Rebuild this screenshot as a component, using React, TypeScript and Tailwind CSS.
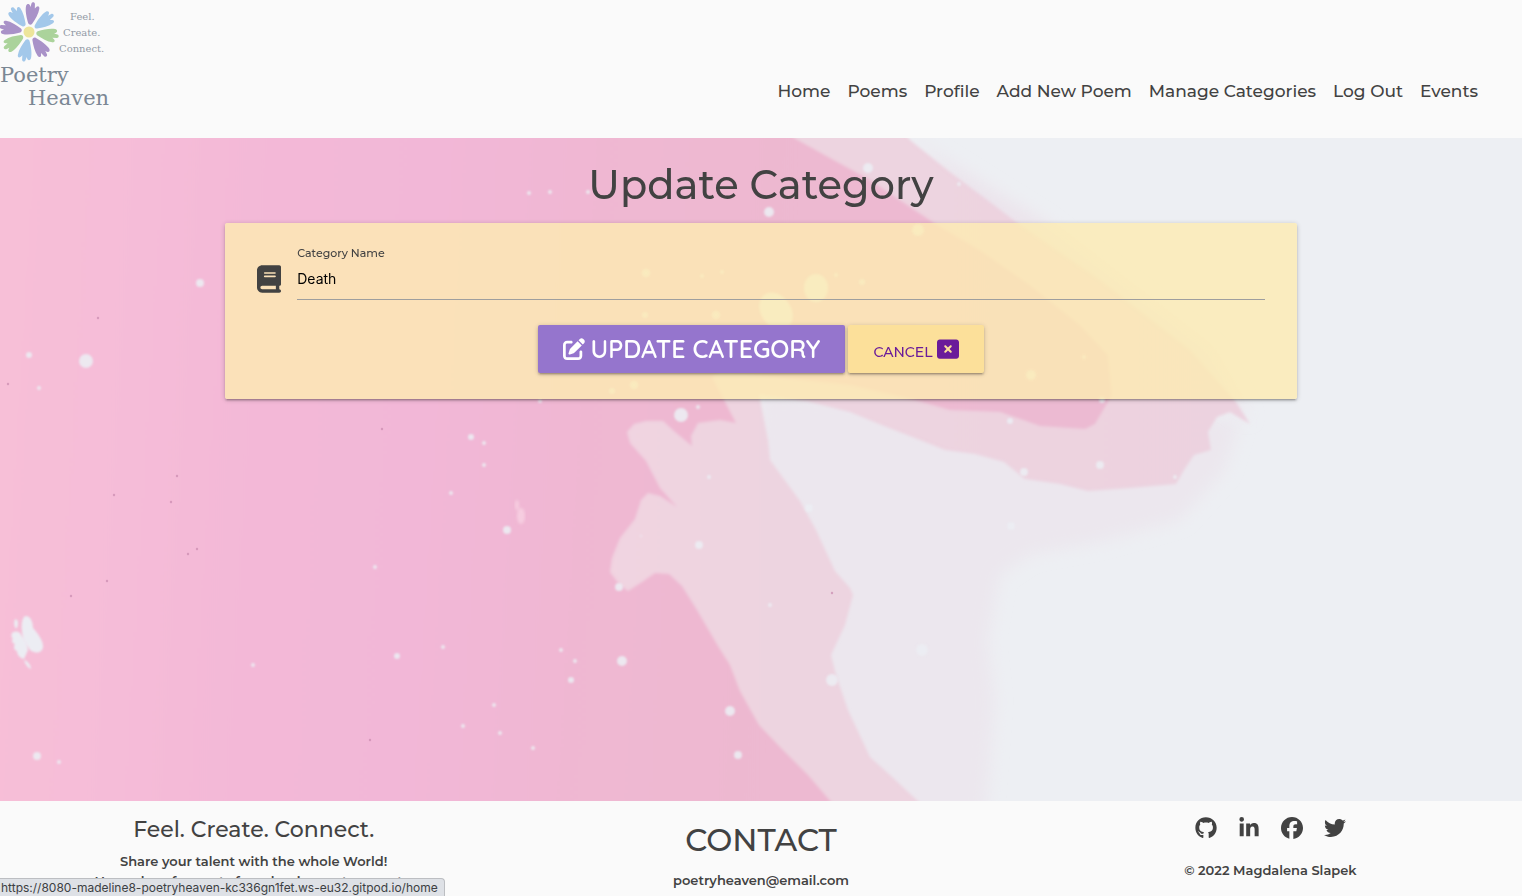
import { FaBook, FaFacebook, FaGithub, FaLinkedinIn, FaPenToSquare, FaRectangleXmark, FaTwitter } from "react-icons/fa6";

const navLinks = ["Home", "Poems", "Profile", "Add New Poem", "Manage Categories", "Log Out", "Events"];

const socialLinks = [
  { name: "GitHub", Icon: FaGithub },
  { name: "LinkedIn", Icon: FaLinkedinIn },
  { name: "Facebook", Icon: FaFacebook },
  { name: "Twitter", Icon: FaTwitter },
];

// Paint droplets: x, y, radius
const droplets = [
  [86, 361, 7], [200, 283, 4], [29, 355, 3], [39, 388, 2], [681, 415, 7], [698, 407, 2], [471, 437, 3],
  [484, 443, 2], [484, 465, 2], [451, 493, 2], [507, 530, 4], [375, 567, 2], [619, 587, 4], [622, 661, 5],
  [730, 711, 5], [738, 755, 4], [571, 680, 3], [575, 661, 2], [561, 650, 2], [494, 705, 2], [397, 656, 3],
  [443, 647, 2], [253, 665, 2], [500, 733, 2], [533, 748, 2], [463, 726, 2], [37, 756, 4], [59, 762, 2],
  [699, 545, 4], [709, 477, 2], [529, 193, 2], [550, 192, 2], [588, 192, 2], [769, 212, 5], [868, 168, 5],
  [959, 184, 2], [918, 230, 6], [645, 315, 3], [646, 273, 4], [716, 315, 4], [702, 276, 2], [722, 272, 2],
  [836, 275, 2], [862, 282, 3], [634, 385, 4], [612, 391, 3], [1084, 357, 2], [1031, 375, 5], [1102, 400, 3],
  [1010, 421, 3], [1024, 472, 4], [1100, 465, 4], [1175, 477, 2], [1011, 526, 4], [832, 680, 6], [922, 650, 6],
  [809, 508, 4], [770, 605, 2], [641, 536, 1], [540, 401, 2],
];

const specks = [
  [98, 318], [114, 495], [382, 429], [197, 549], [107, 581], [71, 596], [370, 740], [171, 502], [188, 554],
  [177, 476], [8, 384], [832, 593],
];

function PaintBackdrop() {
  return (
    <svg aria-hidden="true" viewBox="0 138 1522 663" preserveAspectRatio="none" className="absolute inset-0 h-full w-full">
      <defs>
        <linearGradient id="pink" gradientUnits="userSpaceOnUse" x1="0" y1="460" x2="1000" y2="520">
          <stop offset="0" stopColor="#f7bfd7" />
          <stop offset="0.12" stopColor="#f5bcd8" />
          <stop offset="0.25" stopColor="#f3b8d7" />
          <stop offset="0.42" stopColor="#f2b7d7" />
          <stop offset="0.55" stopColor="#f0b7d3" />
          <stop offset="0.75" stopColor="#edb8d0" />
          <stop offset="1" stopColor="#ecbad2" />
        </linearGradient>
        <linearGradient id="pale" x1="0" y1="0" x2="1" y2="0">
          <stop offset="0" stopColor="#f2d3e1" />
          <stop offset="0.3" stopColor="#edd4e0" />
          <stop offset="1" stopColor="#ecd2df" />
        </linearGradient>
        <filter id="soft" x="-10%" y="-10%" width="120%" height="120%">
          <feGaussianBlur stdDeviation="1.5" />
        </filter>
        <filter id="dot" x="-10%" y="-10%" width="120%" height="120%">
          <feGaussianBlur stdDeviation="0.8" />
        </filter>
        <filter id="haze" x="-10%" y="-10%" width="120%" height="120%">
          <feGaussianBlur stdDeviation="8" />
        </filter>
      </defs>
      <rect y="138" width="1522" height="663" fill="#edeff3" />
      <path filter="url(#haze)" fill="#ece7ee" d="M760 390 L1240 420 L1225 470 L1180 520 L1100 542 L1030 555 L1000 575 L988 640 L995 700 L985 830 L830 830 L740 600Z" />
      <path filter="url(#haze)" fill="#ece4ec" d="M900 120 L930 150 L1045 222 L1210 350 L1250 420 L1190 380 L1000 240Z" />
      <g filter="url(#soft)">
        <path
          fill="url(#pale)"
          d="M760 120 L895 120 L910 140 L950 172 L990 202 L1016 222 L1100 280 L1190 350 L1236 402 L1250 424 L1230 412 L1217 417 L1208 432 L1211 450 L1194 455 L1184 470 L1176 484 L1130 488 L1088 491 L1060 484 L1025 479 L1004 462 L975 454 L945 450 L920 440 L884 426 L850 412 L806 401 L759 394 L768 440 L770 460 L800 501 L816 530 L835 571 L850 588 L853 595 L845 625 L831 655 L836 675 L848 710 L870 757 L890 775 L922 805 L860 820 L560 820 L560 120Z"
        />
        <path
          fill="url(#pink)"
          d="M-60 120 L780 120 L794 138 L830 158 L870 180 L934 223 L980 250 L1030 285 L1080 325 L1108 355 L1112 395 L1095 424 L1085 429 L1040 426 L1000 412 L950 410 L915 400 L850 385 L720 371 L712 377 L724 400 L736 423 L720 420 L698 423 L691 436 L692 446 L675 432 L663 421 L646 421 L634 424 L627 432 L630 443 L646 461 L660 488 L677 507 L660 496 L648 493 L641 500 L635 519 L620 538 L612 558 L610 572 L619 584 L628 591 L642 582 L655 573 L669 574 L682 586 L697 610 L718 646 L730 665 L740 691 L759 725 L780 747 L808 775 L838 810 L-60 820Z"
        />
      </g>
      <g fill="#ecedf3" filter="url(#dot)">
        <ellipse cx="816" cy="288" rx="12" ry="14" />
        <ellipse cx="776" cy="311" rx="15" ry="20" transform="rotate(-35 776 311)" />
        <path d="M25 616c5-1 8 5 8 12 5 5 11 14 10 20-2 6-9 5-13 2-3-6-8-11-8-19-1-6 0-13 3-15z" />
        <path d="M12 633c1-2 7-2 8 0 3 5 8 12 8 17l-4 9c-4-1-7-4-7-8-3-1-4-4-2-7-3-1-4-4-2-5-2-2-2-4-1-6z" />
        <path d="M15 619c3 0 4 4 2 9-2 2-4-5-2-9zM24 660c4 1 7 5 7 9-3-1-6-5-7-9z" />
      </g>
      <g fill="#ecedf3" fillOpacity="0.9" filter="url(#dot)">
        {droplets.map(([x, y, r]) => (
          <circle key={`${x}-${y}`} cx={x} cy={y} r={r} />
        ))}
      </g>
      <g fill="#f7d3e4" fillOpacity="0.8" filter="url(#soft)">
        <ellipse cx="521" cy="516" rx="4" ry="8" />
        <ellipse cx="517" cy="505" rx="2" ry="5" />
      </g>
      <g fill="#c98aae" fillOpacity="0.7">
        {specks.map(([x, y]) => (
          <circle key={`${x}-${y}`} cx={x} cy={y} r="1.2" />
        ))}
      </g>
    </svg>
  );
}

const petals = [
  { angle: 8, color: "#a992c8" },
  { angle: 54, color: "#a3c8ea" },
  { angle: 98, color: "#abd39b" },
  { angle: 144, color: "#a992c8" },
  { angle: 190, color: "#a3c8ea" },
  { angle: 236, color: "#abd39b" },
  { angle: 280, color: "#a992c8" },
  { angle: 324, color: "#a3c8ea" },
];

function Logo() {
  return (
    <svg role="img" aria-label="Poetry Heaven" viewBox="0 0 110 110" className="h-[110px] w-[110px]">
      {petals.map(({ angle, color }) => (
        <path
          key={angle}
          fill={color}
          transform={`rotate(${angle} 29 32)`}
          d="M27 23.500C24.500 18 22 11 22.500 6.500c.4-2.500 2.500-3 3.700-1L27 7l.5-3.500C28 1.500 30.500 1.500 31 3.500L31.500 8l1.500-2c1.500-1.500 3-.5 3 1.500 0 5-2.500 11-5 16-1 1.500-3 1.500-4 0z"
        />
      ))}
      <circle cx="29" cy="32" r="5.500" fill="#ede59b" />
      <g fontFamily="'DejaVu Serif', serif" fontSize="10" fill="#939ba6">
        <text x="70" y="20">Feel.</text>
        <text x="63" y="36">Create.</text>
        <text x="59" y="52">Connect.</text>
      </g>
      <g fontFamily="'DejaVu Serif', serif" fontSize="21" fill="#7b8794">
        <text x="0" y="82">Poetry</text>
        <text x="28" y="105">Heaven</text>
      </g>
    </svg>
  );
}

export default function App() {
  return (
    <div className="h-screen overflow-y-auto bg-[#fafafa] font-['Montserrat','Inter',sans-serif] font-medium text-[#424242] [scrollbar-width:none]">
      <header className="flex h-[138px] items-start justify-between">
        <a href="#home">
          <Logo />
        </a>
        <nav className="flex gap-[17px] pt-[79px] pr-11 text-[17px] leading-6 whitespace-nowrap">
          {navLinks.map((label) => (
            <a key={label} href="#nav">
              {label}
            </a>
          ))}
        </nav>
      </header>

      <main className="relative isolate min-h-[74vh] overflow-hidden">
        <PaintBackdrop />
        <div className="relative mx-auto w-[70.4%] pt-5">
          <h1 className="text-center text-[40px] leading-[53px]">Update Category</h1>
          <form
            onSubmit={(event) => event.preventDefault()}
            className="mt-3 rounded-xs bg-[#fdebb2]/80 px-8 pt-6 pb-[26px] shadow-[0_2px_2px_0_rgba(0,0,0,0.14),0_3px_1px_-2px_rgba(0,0,0,0.12),0_1px_5px_0_rgba(0,0,0,0.2)]"
          >
            <div className="flex gap-4">
              <FaBook aria-hidden="true" className="mt-[18px] h-7 w-6 shrink-0" />
              <div className="flex flex-1 flex-col">
                <label htmlFor="category-name" className="text-[11px] leading-3">
                  Category Name
                </label>
                <input
                  id="category-name"
                  type="text"
                  defaultValue="Death"
                  className="h-[41px] border-b border-[#9e9e9e] bg-transparent pb-0.5 font-['Inter',sans-serif] text-sm font-normal text-black outline-none"
                />
              </div>
            </div>
            <div className="mt-[25px] flex justify-center gap-[3px]">
              <button
                type="submit"
                className="flex h-12 items-center gap-[5px] rounded-xs bg-[#9575cd] px-[25px] font-['Quicksand','Lato',sans-serif] text-[25px] font-semibold text-white shadow-[0_2px_2px_0_rgba(0,0,0,0.14),0_3px_1px_-2px_rgba(0,0,0,0.12),0_1px_5px_0_rgba(0,0,0,0.2)]"
              >
                <FaPenToSquare aria-hidden="true" className="size-[22px]" />
                UPDATE CATEGORY
              </button>
              <a
                href="#categories"
                className="flex h-12 items-center gap-1 rounded-xs bg-[#fce09a] px-[25px] text-sm text-[#6a1b9a] shadow-[0_2px_2px_0_rgba(0,0,0,0.14),0_3px_1px_-2px_rgba(0,0,0,0.12),0_1px_5px_0_rgba(0,0,0,0.2)]"
              >
                <span className="pt-1.5">CANCEL</span>
                <FaRectangleXmark aria-hidden="true" className="size-[22px]" />
              </a>
            </div>
          </form>
        </div>
      </main>

      <footer className="grid grid-cols-3 text-center text-[13px] leading-5 font-semibold">
        <section className="pt-[13px]">
          <h2 className="text-[22px] leading-8 font-medium">Feel. Create. Connect.</h2>
          <p className="mt-[5px]">Share your talent with the whole World!</p>
          <p>Have place for poets from beginners to experts.</p>
        </section>
        <section className="pt-4">
          <h2 className="text-[31px] leading-[46px] font-medium">CONTACT</h2>
          <p className="mt-[7px]">poetryheaven@email.com</p>
        </section>
        <section className="pt-4 pl-1">
          <div className="flex justify-center gap-[21px]">
            {socialLinks.map(({ name, Icon }) => (
              <a key={name} href="#social" aria-label={name}>
                <Icon className="size-[22px]" />
              </a>
            ))}
          </div>
          <p className="mt-[21px]">© 2022 Magdalena Slapek</p>
        </section>
      </footer>

      <div className="fixed bottom-0 left-0 rounded-tr-sm border-t border-r border-[#bcbec2] bg-[#dee1e6] pr-1.5 pl-px font-['Inter',sans-serif] text-xs leading-[17px] font-normal text-[#3c4043]">
        https://8080-madeline8-poetryheaven-kc336gn1fet.ws-eu32.gitpod.io/home
      </div>
    </div>
  );
}
